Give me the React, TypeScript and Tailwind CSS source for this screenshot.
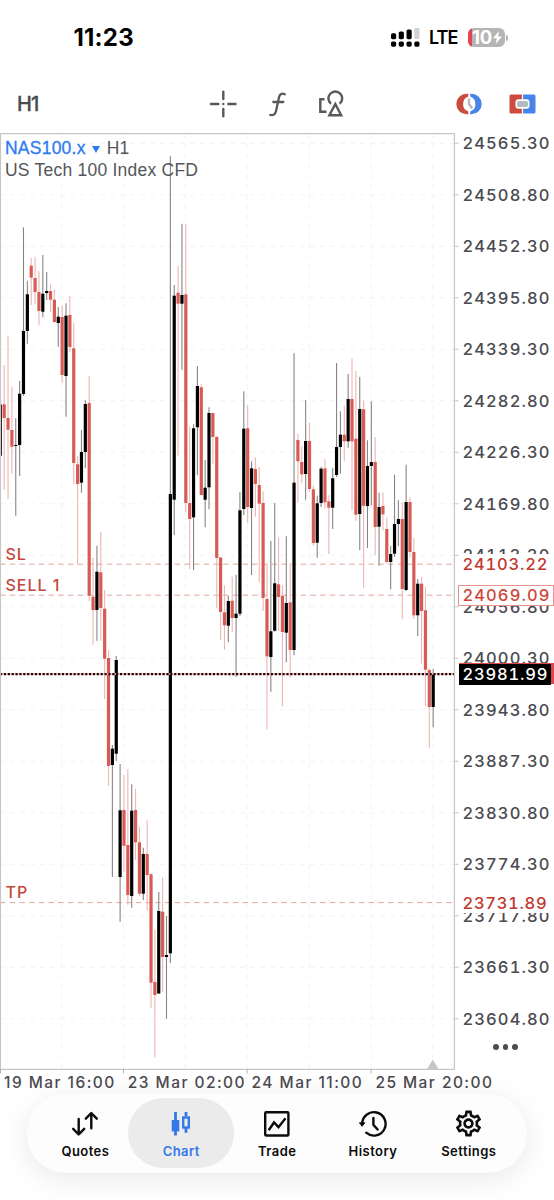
import type { ReactNode } from 'react';
import { MdOutlineSettings } from 'react-icons/md';

// [bullish, high, bodyTop, bodyBottom, low] in chart pixels
type Candle = [number, number, number, number, number];

const candles: Candle[] = [
  [1, 404.5, 404.5, 455.7, 455.7],
  [0, 365, 404.3, 418, 490],
  [0, 336, 418, 429.7, 499],
  [0, 386.7, 430, 446.7, 474],
  [1, 418.3, 445, 446, 515.7],
  [1, 381, 393.7, 445, 476],
  [1, 227.3, 331, 394, 396],
  [1, 280.7, 294.3, 331, 343.7],
  [0, 257.7, 265.7, 277.7, 305],
  [0, 256.7, 278, 292, 304.3],
  [0, 271.3, 292, 311, 325.3],
  [1, 255, 293.7, 311.7, 317.3],
  [1, 272, 291, 293, 300],
  [0, 283.7, 291, 299.7, 311.7],
  [0, 289.3, 299.7, 322, 322.7],
  [1, 307, 316.7, 323, 346.7],
  [0, 306, 317, 375, 383.3],
  [1, 303.3, 315.7, 376, 416.7],
  [0, 296, 315, 347, 352],
  [0, 322.7, 348.3, 463, 484],
  [0, 455.7, 464.3, 484, 564.3],
  [1, 430, 452, 482.7, 492.7],
  [1, 400.3, 404, 452, 468.3],
  [0, 376, 403, 595.7, 601],
  [0, 557.7, 596.7, 610, 644.7],
  [1, 545.7, 571.7, 610, 640.7],
  [0, 531.7, 572.3, 608, 640.7],
  [0, 590, 608.7, 658.7, 699],
  [0, 650, 658, 766, 785.7],
  [1, 745, 748.7, 765, 877],
  [1, 656, 660, 753.7, 761],
  [1, 764, 810.3, 877, 921.7],
  [0, 775, 810, 845.7, 872.3],
  [0, 769, 845, 895, 904.7],
  [1, 784.3, 810.7, 896, 907.7],
  [0, 789, 810, 842.3, 860],
  [0, 826.7, 842.3, 893.7, 896.3],
  [1, 847.7, 854, 893.7, 900],
  [0, 820.3, 854, 875, 910.7],
  [0, 873.3, 874.3, 982.7, 1007.7],
  [0, 930, 982, 995, 1057.3],
  [1, 892, 911, 993.5, 994],
  [0, 877.3, 911.7, 957, 991.7],
  [1, 916, 955, 957, 1018.7],
  [1, 156.3, 494, 953.3, 963],
  [1, 285, 295.7, 499.7, 535],
  [0, 266, 292.7, 303.7, 455.7],
  [1, 223.7, 295, 303.7, 369.7],
  [0, 223.7, 294.3, 503, 512.3],
  [0, 427, 503, 519, 569],
  [1, 424.3, 428.3, 517.3, 570.3],
  [1, 366, 386, 427.3, 475],
  [0, 384, 387.3, 495, 495],
  [1, 460, 487.7, 499.7, 527.3],
  [1, 407.3, 413, 487.3, 509.3],
  [0, 413, 413, 437, 463.7],
  [0, 435.7, 437, 558, 608.3],
  [0, 557, 557.5, 612, 640],
  [0, 585.3, 612.3, 625.3, 649.7],
  [1, 596, 601, 625.7, 642.3],
  [0, 576.7, 600.7, 618, 632.3],
  [1, 574.7, 613.7, 618, 676.7],
  [1, 492, 510.3, 613.7, 616],
  [1, 391.3, 428.7, 509, 515],
  [0, 405.3, 428.3, 507, 523.3],
  [1, 461.3, 468.3, 508, 575],
  [0, 457.3, 469, 484, 516.7],
  [0, 466.7, 485, 503.7, 582],
  [0, 491.3, 503, 598, 611],
  [0, 564.3, 599, 656.3, 729.3],
  [1, 541, 631.3, 657, 691.7],
  [1, 503, 583.3, 630.7, 631.7],
  [0, 537.7, 584.3, 597, 630.7],
  [0, 585, 596, 632, 706.3],
  [1, 536.3, 603, 632.7, 662.3],
  [0, 563.3, 602.3, 650, 677.3],
  [1, 353.3, 482.7, 650, 655.3],
  [0, 433.7, 440, 461.3, 502.7],
  [0, 446.3, 462, 474.3, 483.3],
  [1, 400, 441, 474, 499.7],
  [0, 422.7, 441, 489, 491.7],
  [0, 485.7, 489.3, 543, 545.7],
  [1, 495.7, 503.3, 542.7, 557.7],
  [1, 466.7, 468.7, 503, 507],
  [0, 459.3, 468.3, 502.3, 508.3],
  [0, 495.3, 501.3, 507.7, 554],
  [1, 467.7, 478.3, 507.7, 529],
  [1, 363, 447, 475, 477],
  [1, 411.3, 434.7, 447, 473.7],
  [0, 405.7, 434.7, 441.3, 461],
  [1, 374, 399, 441.3, 447.7],
  [0, 358.3, 399, 441.3, 510.3],
  [0, 371, 438.7, 514.7, 520.7],
  [1, 377, 409, 514, 550],
  [0, 400.7, 409.3, 505.7, 588.3],
  [1, 440.3, 466, 506, 548],
  [1, 401.3, 462, 466, 505.3],
  [0, 437, 462, 527, 555],
  [1, 492.7, 507, 526.7, 565.7],
  [0, 492.3, 506, 514.3, 530.3],
  [0, 517.7, 529, 562, 563.5],
  [1, 545.7, 554, 562, 589.3],
  [1, 474.7, 524, 553.7, 557],
  [1, 500.3, 519, 524, 546.3],
  [0, 502.7, 519, 589, 619.3],
  [1, 464.7, 502, 590, 591],
  [0, 497.3, 502, 552, 557.7],
  [0, 538, 552, 615.3, 619],
  [1, 579, 583.7, 615.3, 636],
  [0, 576.7, 583.7, 611, 663.7],
  [0, 586.7, 610.3, 669.7, 706],
  [0, 668.3, 670, 707, 748.3],
  [1, 669, 674.3, 707, 727.3],
];

const prices = [
  '24565.30', '24508.80', '24452.30', '24395.80', '24339.30', '24282.80',
  '24226.30', '24169.80', '24113.30', '24056.80', '24000.30', '23943.80',
  '23887.30', '23830.80', '23774.30', '23717.80', '23661.30', '23604.80',
];

const times = ['19 Mar 16:00', '23 Mar 02:00', '24 Mar 11:00', '25 Mar 20:00'];

const STEP = 51.5;
const gridY = prices.map((_, i) => 143.3 + i * STEP);
const gridX = [61.8, 123.5, 185.3, 247.1, 309.3, 371, 432.8];

function CandleChart() {
  return (
    <svg width="460" height="943" viewBox="0 133 460 943" className="block">
      {gridY.map(y => (
        <g key={y}>
          <line x1="0" x2="454" y1={y} y2={y} stroke="#f3f3f4" strokeDasharray="5 5" />
          <line x1="454" x2="458.500" y1={y} y2={y} stroke="#c4c4c6" />
        </g>
      ))}
      {gridX.map(x => (
        <line key={x} x1={x} x2={x} y1="134" y2="1069" stroke="#f3f3f4" strokeDasharray="5 5" />
      ))}

      {[564.2, 595.2, 902.6].map(y => (
        <line key={y} x1="0" x2="454" y1={y} y2={y} stroke="#e6a5a1" strokeDasharray="5.500 4.200" />
      ))}

      {candles.map(([up, high, top, bottom, low], i) => {
        const x = 0.3 + i * 3.865;
        return (
          <g key={i}>
            <line x1={x} x2={x} y1={high} y2={low} stroke={up ? '#858587' : '#eeb5b1'} strokeWidth="1.1" />
            <rect x={x - 1.6} y={top} width="3.2" height={bottom - top} fill={up ? '#000' : '#d85a54'} />
          </g>
        );
      })}

      {/* bid / ask line */}
      <line x1="0" x2="454" y1="674" y2="674" stroke="#f0b5b3" strokeWidth="1.600" />
      <line x1="0" x2="454" y1="674.200" y2="674.200" stroke="#2a0508" strokeWidth="2.200" strokeDasharray="2.200 1.670" />

      <path d="M427 1069 L432.800 1059.500 L438.500 1069 Z" fill="#c6c6c8" />
      <path d="M0.500 1069.400 V133.700 H454.400 V1069.400 Z" fill="none" stroke="#c6c6c8" strokeWidth="1.200" />
      {[0.5, 123.5, 247.1, 371].map(x => (
        <line key={x} x1={x} x2={x} y1="1069" y2="1073.500" stroke="#b4b4b6" />
      ))}
    </svg>
  );
}

function StatusBar() {
  return (
    <div className="flex h-[75px] items-center pl-[73.500px] pr-[46px] text-black">
      <span className="mt-px text-[24px] font-bold leading-none tracking-[0.2px]">11:23</span>
      <div className="ml-auto flex items-center">
        <svg width="29" height="20" viewBox="390.500 28 29 20" className="mr-[9px]">
          <g fill="#000">
            <rect x="390.500" y="33.300" width="5.200" height="5.900" rx="1.600" />
            <rect x="398.200" y="31.500" width="5.200" height="7.700" rx="1.600" />
            <rect x="406" y="29.500" width="5.200" height="9.700" rx="1.600" />
            <rect x="390.500" y="41.400" width="5.200" height="5.300" rx="1.600" />
            <rect x="398.200" y="41.400" width="5.200" height="5.300" rx="1.600" />
            <rect x="406" y="41.400" width="5.200" height="5.300" rx="1.600" />
            <rect x="413.800" y="41.400" width="5.200" height="5.300" rx="1.600" />
          </g>
          <rect x="413.800" y="28" width="5.200" height="11" rx="1.600" fill="#d2d2d2" />
        </svg>
        <span className="mt-px w-[30px] whitespace-nowrap text-[18px] font-semibold leading-none tracking-[-1px]">LTE</span>
        <div className="ml-[9px] flex h-[19.500px] w-[37px] items-center overflow-hidden rounded-[6px] bg-[#b5b5b5]">
          <div className="h-full w-[4px] bg-[#e3454c]" />
          <span className="text-[18.500px] font-bold leading-none tracking-[-0.3px] text-white">10</span>
          <svg width="11" height="13" viewBox="0 0 10 13" fill="#fff">
            <path d="M6.500 0 L0.500 7.200 H4.300 L3.200 13 L9.500 5.500 H5.600 Z" />
          </svg>
        </div>
        <div className="ml-px h-[6px] w-[2px] rounded-r bg-[#b5b5b5]" />
      </div>
    </div>
  );
}

function Toolbar() {
  return (
    <div className="flex h-[58px] items-center pl-[17px] pr-[18.500px]">
      <span className="w-[192px] text-[20px] font-medium leading-none tracking-[-0.8px] text-[#4a4b4d] [-webkit-text-stroke:0.3px_#4a4b4d]">H1</span>
      <svg width="28" height="28" viewBox="0 0 28 28" stroke="#58595b" strokeWidth="2.400" strokeLinecap="round">
        <path d="M14.300 1.800 V9 M14.300 19 V26.300 M2 14 H9.300 M19.300 14 H26.500" />
        <path d="M14.300 14 h0.010" />
      </svg>
      <svg width="20" height="28" viewBox="0 0 20 28" fill="none" stroke="#58595b" strokeWidth="2.300" strokeLinecap="round" className="ml-[31px]">
        <path d="M16.800 4.200 C14 2.800 11.700 4 11 7.300 L8.100 20.800 C7.400 24 5.500 25.700 2.300 24.900" />
        <path d="M5.300 12 H15.300" />
      </svg>
      <svg width="28" height="28" viewBox="0 0 28 28" fill="none" stroke="#58595b" strokeWidth="2.400" className="ml-[28.500px]">
        <path d="M7.500 9.200 H3.300 V21.800 H9.500" />
        <path d="M14 13.800 A6.900 6.900 0 1 1 22.600 13.800" />
        <path d="M18.300 14 L24.200 25.200 H12.400 Z" />
      </svg>
      <svg width="28" height="24" viewBox="0 0 28 24" className="ml-auto">
        <path d="M13.300 1.800 H11.500 A10.200 10.200 0 0 0 11.500 22.200 H13.300 V19.500 A8 8 0 0 1 13.300 4.500 Z" fill="#cb4b3e" />
        <path d="M15.200 1.800 H16.500 A10.200 10.200 0 0 1 16.500 22.200 H15.200 V19.500 A8 8 0 0 0 15.200 4.500 Z" fill="#4684ea" />
        <path d="M14 6.500 V12 L17.200 16.500" fill="none" stroke="#b4babd" strokeWidth="2.400" />
      </svg>
      <svg width="27" height="20" viewBox="0 0 27 20" className="ml-[25.500px]">
        <path d="M2 0.500 H12.900 V5.300 H9.500 A3 3 0 0 0 6.500 8.300 V11.700 A3 3 0 0 0 9.500 14.700 H12.900 V19.500 H2 A1.500 1.500 0 0 1 0.500 18 V2 A1.500 1.500 0 0 1 2 0.500 Z" fill="#cb4b3e" />
        <path d="M25 0.500 H14.100 V5.300 H17.500 A3 3 0 0 1 20.500 8.300 V11.700 A3 3 0 0 1 17.500 14.700 H14.100 V19.500 H25 A1.500 1.500 0 0 0 26.500 18 V2 A1.500 1.500 0 0 0 25 0.500 Z" fill="#4684ea" />
        <rect x="8" y="7" width="11" height="6" rx="1.800" fill="#b4babd" />
      </svg>
    </div>
  );
}

const icons: Record<string, ReactNode> = {
  Quotes: (
    <svg width="28" height="28" viewBox="0 0 28 28" fill="none" stroke="currentColor" strokeWidth="2.400" strokeLinecap="round" strokeLinejoin="round">
      <path d="M7.700 9 V24.300 M2.200 18.800 L7.700 24.500 L13.200 18.800" />
      <path d="M20.300 18.300 V3.200 M14.800 8.700 L20.300 3 L25.800 8.700" />
    </svg>
  ),
  Chart: (
    <svg width="28" height="28" viewBox="0 0 28 28" fill="none" stroke="currentColor" strokeWidth="2.800">
      <path d="M8.500 2 V25.500" />
      <rect x="4.700" y="10" width="7.600" height="11.400" fill="currentColor" stroke="none" />
      <path d="M19 2 V6.500 M19 18 V22.700" />
      <rect x="16.200" y="7.500" width="5.600" height="10" strokeWidth="2.400" />
    </svg>
  ),
  Trade: (
    <svg width="28" height="28" viewBox="0 0 28 28" fill="none" stroke="currentColor" strokeWidth="2.400" strokeLinejoin="round">
      <rect x="2.200" y="2.300" width="23.200" height="23.200" rx="1" />
      <path d="M5.700 20.200 L11 12.500 L15.500 17.200 L22.500 8.200" strokeLinejoin="miter" />
    </svg>
  ),
  History: (
    <svg width="28" height="28" viewBox="0 0 28 28" fill="none" stroke="currentColor" strokeWidth="2.400" strokeLinecap="round">
      <path d="M3.200 14 A11.700 11.700 0 1 1 7.200 22.700" />
      <path d="M0.800 12.800 H5.800 L3.300 16 Z" fill="currentColor" strokeWidth="1" strokeLinejoin="round" />
      <path d="M14.400 8 V14.800 L18.600 19.500" />
    </svg>
  ),
  Settings: <MdOutlineSettings size={31} className="-m-[1.5px]" />,
};

function TabBar() {
  return (
    <div className="mx-auto mt-[2px] flex h-[79px] w-[500px] items-center rounded-[39px] bg-[#fdfdfd] pb-[2px] pl-[10.500px] shadow-[0_6px_30px_rgba(0,0,0,0.09)]">
      {Object.keys(icons).map(label => (
        <div
          key={label}
          className={`flex h-[70px] flex-col items-center rounded-[35px] pt-[12px] ${
            label === 'Chart' ? '-mx-[5px] w-[106px] bg-[#ebebeb] text-[#3478e8]' : 'w-[95.800px] text-[#0c0c0c]'
          }`}
        >
          {icons[label]}
          <span className="mt-[5px] text-[13px] font-semibold leading-[16px] tracking-[0.45px]">{label}</span>
        </div>
      ))}
    </div>
  );
}

export default function App() {
  return (
    <div className="flex h-[1200px] w-[554px] flex-col overflow-hidden bg-white font-['Inter',sans-serif]">
      <StatusBar />
      <Toolbar />

      <div className="relative flex h-[940px]">
        <div className="w-[460px] shrink-0">
          <CandleChart />
        </div>

        {/* Price scale */}
        <div className="relative flex flex-col pl-[2.500px] text-[16.500px] font-medium tracking-[1.1px] tabular-nums text-[#4a4a50]">
          <div className="-mt-[15.400px]">
            {prices.map(p => (
              <div key={p} className="flex h-[51.500px] items-center leading-none">{p}</div>
            ))}
          </div>
          <div className="absolute left-0 top-[421px] flex h-[20px] w-[94px] items-center bg-white pl-[2.500px] tracking-[0.8px] text-[#c0392f]">24103.22</div>
          <div className="absolute -left-[2px] top-[452px] flex h-[21px] w-[96px] items-center border border-[#e8928c] bg-white pl-[3.500px] text-[#d0453a]">24069.09</div>
          <div className="absolute left-0 top-[760px] flex h-[20px] w-[94px] items-center bg-white pl-[2.500px] tracking-[0.7px] text-[#c0392f]">23731.89</div>
          <div className="absolute -left-[1px] top-[530px] h-[21px] w-[95px] bg-[#e0454a]" />
          <div className="absolute -left-[1px] top-[531px] flex h-[21px] w-[92px] items-center bg-black pl-[3.500px] tracking-[0.8px] text-white">23981.99</div>
          <div className="absolute left-[33px] top-[911px] flex gap-[4px]">
            <i className="size-[5.500px] rounded-full bg-[#4c4c52]" />
            <i className="size-[5.500px] rounded-full bg-[#4c4c52]" />
            <i className="size-[5.500px] rounded-full bg-[#4c4c52]" />
          </div>
        </div>

        {/* Symbol title */}
        <div className="absolute left-[5px] top-[4px] font-['Liberation_Sans',sans-serif] text-[17.500px] leading-[22px] tracking-[0.23px] text-[#55565a]">
          <div className="flex items-center">
            <span className="text-[#2f7af0] [-webkit-text-stroke:0.3px_#2f7af0]">NAS100.x</span>
            <span className="ml-[6px] mr-[7px] mt-[2px] border-x-[4px] border-t-[7px] border-x-transparent border-t-[#2f7af0]" />
            <span>H1</span>
          </div>
          <div className="whitespace-nowrap">US Tech 100 Index CFD</div>
        </div>

        {/* Order levels */}
        <div className="absolute left-[5.500px] top-[412px] text-[16px] font-medium leading-[18px] tracking-[1px] text-[#c5473c]">SL</div>
        <div className="absolute left-[5.500px] top-[443px] text-[16px] font-medium leading-[18px] tracking-[1px] text-[#c5473c]">SELL 1</div>
        <div className="absolute left-[5.500px] top-[750px] text-[16px] font-medium leading-[18px] tracking-[1px] text-[#c5473c]">TP</div>
      </div>

      {/* Time scale */}
      <div className="flex h-[19px] pl-[4px] text-[15.500px] font-medium leading-[19px] tracking-[1.45px] text-[#4a4a50]">
        {times.map(t => (
          <div key={t} className="w-[123.800px] shrink-0 whitespace-nowrap">{t}</div>
        ))}
      </div>

      <TabBar />
    </div>
  );
}
